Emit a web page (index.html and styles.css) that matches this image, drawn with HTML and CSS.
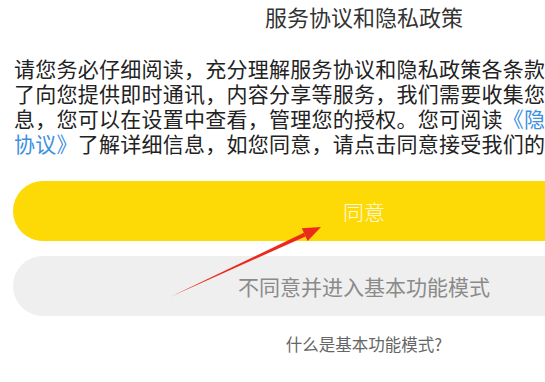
FILE: index.html
```html
<!DOCTYPE html>
<html lang="zh-CN">
<head>
<meta charset="utf-8">
<title>服务协议和隐私政策</title>
<link rel="stylesheet" href="styles.css">
</head>
<body>
<div class="dialog">
  <h1 class="title">服务协议和隐私政策</h1>
  <p class="content">
    <span class="line">请您务必仔细阅读，充分理解服务协议和隐私政策各条款</span>
    <span class="line">了向您提供即时通讯，内容分享等服务，我们需要收集您</span>
    <span class="line">息，您可以在设置中查看，管理您的授权。您可阅读<span class="link">《隐</span></span>
    <span class="line"><span class="link">协议》</span>了解详细信息，如您同意，请点击同意接受我们的</span>
  </p>
  <div class="actions">
    <button class="btn btn-agree">同意</button>
    <button class="btn btn-basic">不同意并进入基本功能模式</button>
    <span class="help">什么是基本功能模式?</span>
  </div>
</div>
<svg class="arrow" width="545" height="382" viewBox="0 0 545 382">
  <polygon points="170,297 303.9,232.8 305.5,236.4" fill="#ec2a1c"/>
  <polygon points="321,227 301.8,228.3 307.6,240.9" fill="#ec2a1c"/>
</svg>
</body>
</html>
```
FILE: styles.css
```css
html, body {
  margin: 0;
  padding: 0;
  overflow: hidden;
  background: #ffffff;
}
body {
  width: 545px;
  height: 382px;
  position: relative;
  font-family: "Noto Sans CJK SC", "Noto Sans", sans-serif;
}
.dialog {
  width: 702px;
  margin-left: 13px;
  display: flex;
  flex-direction: column;
}
.title {
  margin: 0;
  height: 32px;
  line-height: 32px;
  font-size: 22px;
  font-weight: 400;
  color: #333333;
  text-align: center;
}
.content {
  margin: 24px 0 0 1px;
  font-size: 21px;
  line-height: 25px;
  letter-spacing: 0.25px;
  color: #222222;
}
.line {
  display: block;
  white-space: nowrap;
}
.link {
  color: #3d8fe0;
}
.actions {
  margin-top: 25px;
  display: flex;
  flex-direction: column;
  align-items: stretch;
}
.btn {
  height: 60px;
  border: none;
  border-radius: 30px;
  font-family: inherit;
  font-size: 21px;
  padding: 0;
}
.btn-agree {
  background: #fdd906;
  color: #fffbe0;
  font-weight: 300;
}
.btn-basic {
  margin-top: 15px;
  background: #efefef;
  color: #8a8a8a;
}
.help {
  margin-top: 15px;
  text-align: center;
  font-size: 16.5px;
  line-height: 26px;
  color: #666666;
}
.arrow {
  position: absolute;
  left: 0;
  top: 0;
  pointer-events: none;
}
```
